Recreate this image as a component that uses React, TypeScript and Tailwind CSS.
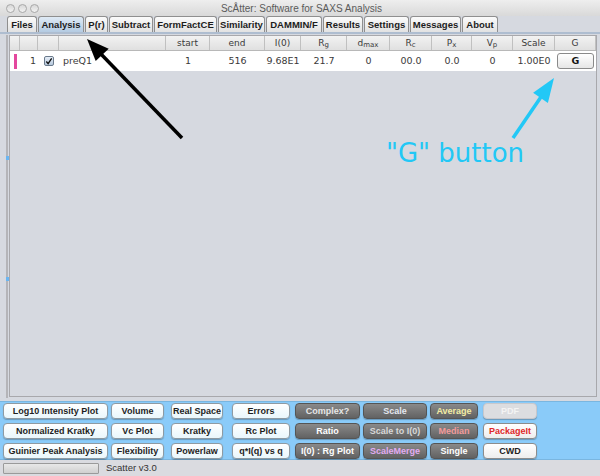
import React from "react";

const tabs = ["Files", "Analysis", "P(r)", "Subtract", "FormFactCE", "Similarity", "DAMMIN/F", "Results", "Settings", "Messages", "About"];
const tabW = ["w-[30px]", "w-[46px]", "w-[23px]", "w-[44px]", "w-[63px]", "w-[47px]", "w-[56px]", "w-[40px]", "w-[45px]", "w-[51px]", "w-[36px]"];

const colW = ["w-[10px]", "w-[18px]", "w-[21px]", "w-[107px]", "w-[44px]", "w-[55px]", "w-[36px]", "w-[46px]", "w-[43px]", "w-[42px]", "w-[40px]", "w-[41px]", "w-[42px]", "w-[41px]"];

type Btn = { t: string; k: "light" | "dark" | "pdf" | "white"; c?: string };
const colSpec = [
  "w-[105px] ml-[3px]",
  "w-[53px] ml-[3px]",
  "w-[52px] ml-[7px]",
  "w-[58px] ml-[9px]",
  "w-[65px] ml-[5px]",
  "w-[64px] ml-[3px]",
  "w-[48px] ml-[3px]",
  "w-[54px] ml-[5px]",
];
const rows: Btn[][] = [
  [
    { t: "Log10 Intensity Plot", k: "light" },
    { t: "Volume", k: "light" },
    { t: "Real Space", k: "light" },
    { t: "Errors", k: "light" },
    { t: "Complex?", k: "dark", c: "text-[#e6e6e6]" },
    { t: "Scale", k: "dark", c: "text-[#e4e8f0]" },
    { t: "Average", k: "dark", c: "text-[#f2eca4]" },
    { t: "PDF", k: "pdf" },
  ],
  [
    { t: "Normalized Kratky", k: "light" },
    { t: "Vc Plot", k: "light" },
    { t: "Kratky", k: "light" },
    { t: "Rc Plot", k: "light" },
    { t: "Ratio", k: "dark", c: "text-white" },
    { t: "Scale to I(0)", k: "dark", c: "text-[#d8d8d8]" },
    { t: "Median", k: "dark", c: "text-[#f29a9a]" },
    { t: "PackageIt", k: "white", c: "text-[#e0282a]" },
  ],
  [
    { t: "Guinier Peak Analysis", k: "light" },
    { t: "Flexibility", k: "light" },
    { t: "Powerlaw", k: "light" },
    { t: "q*I(q) vs q", k: "light" },
    { t: "I(0) : Rg Plot", k: "dark", c: "text-white" },
    { t: "ScaleMerge", k: "dark", c: "text-[#e2acf2]" },
    { t: "Single", k: "dark", c: "text-white" },
    { t: "CWD", k: "white", c: "text-[#222]" },
  ],
];

const LIB = { fontFamily: '"Liberation Sans", Arial, sans-serif' };

function Button({ b, spec }: { b: Btn; spec: string }) {
  let cls = "";
  if (b.k === "light") cls = "bg-gradient-to-b from-[#ffffff] to-[#e9f7fc] border-[#8e9aa2] text-[#1e1e1e]";
  else if (b.k === "dark") cls = "bg-gradient-to-b from-[#8a8a8a] to-[#626262] border-[#555] " + (b.c ?? "");
  else if (b.k === "pdf") cls = "bg-[#dcdde0] border-[#c8c8cc] text-[#f4f4f4]";
  else cls = "bg-gradient-to-b from-[#ffffff] to-[#eeeeee] border-[#8c8c8c] " + (b.c ?? "");
  return (
    <div style={LIB} className={`${spec} h-[16px] shrink-0 rounded-[4px] border flex items-center justify-center whitespace-nowrap text-[9px] font-bold leading-none shadow-[0_1px_1px_rgba(0,0,0,0.25)] ${cls}`}>
      {b.t}
    </div>
  );
}

export default function App() {
  return (
    <div className="relative w-[600px] h-[476px] overflow-hidden bg-[#d6d9e0] flex flex-col" style={{ fontFamily: '"DejaVu Sans", "Liberation Sans", sans-serif' }}>
      {/* title bar */}
      <div className="h-[16px] bg-gradient-to-b from-[#eeeeee] to-[#d9d9d9] flex items-center relative">
        <div className="flex gap-[3px] ml-[6px]">
          <div className="w-[9px] h-[9px] rounded-full border border-[#a8a8a8] bg-gradient-to-b from-[#d8d8d8] to-[#f2f2f2]" />
          <div className="w-[9px] h-[9px] rounded-full border border-[#a8a8a8] bg-gradient-to-b from-[#d8d8d8] to-[#f2f2f2]" />
          <div className="w-[9px] h-[9px] rounded-full border border-[#a8a8a8] bg-gradient-to-b from-[#d8d8d8] to-[#f2f2f2]" />
        </div>
        <div style={LIB} className="flex-1 text-center text-[10px] text-[#5a5a5a] -ml-[36px]">ScÅtter: Software for SAXS Analysis</div>
      </div>
      {/* tab bar */}
      <div className="h-[18px] flex items-end pl-[7px] border-b-2 border-[#aebdd0]">
        {tabs.map((t, i) => (
          <div
            key={t}
            style={LIB}
            className={`${tabW[i]} h-[16px] mr-[1px] border border-b-0 border-[#8f8f8f] rounded-t-[3px] flex items-center justify-center whitespace-nowrap text-[9.5px] font-bold leading-none text-[#1c1c1c] ${
              i === 1 ? "bg-gradient-to-b from-[#dfeaf5] to-[#b4cbe2]" : "bg-gradient-to-b from-[#fbfbfb] to-[#e2e2e2]"
            }`}
          >
            {t}
          </div>
        ))}
      </div>
      {/* main */}
      <div className="flex-1 flex pt-[1px]">
        <div className="w-[10px] relative">
          <div className="absolute left-[6px] top-0 bottom-[0px] w-[2px] border-x border-[#b4b4b8] bg-[#e4e4e8]" />
          <div className="absolute left-[6px] top-[121px] w-[3px] h-[4px] bg-[#6ab6f2]" />
          <div className="absolute left-[6px] top-[242px] w-[3px] h-[4px] bg-[#6ab6f2]" />
        </div>
        <div className="flex-1 mr-[3px] mb-[1px] border border-[#a8a8ac] bg-[#d6d9e0]">
          <div className="flex h-[15px] bg-gradient-to-b from-[#f2f2f2] to-[#e0e0e0] border-b border-[#b8b8b8] text-[9px] text-[#3a3a3a]">
            {["", "", "", "", "start", "end", "I(0)", "Rg", "dmax", "Rc", "Px", "Vp", "Scale", "G"].map((h, i) => (
              <div key={i} className={`${colW[i]} shrink-0 border-r border-[#c0c0c0] flex items-center justify-center leading-none`}>
                {h === "Rg" ? <span>R<sub className="text-[7px]">g</sub></span> : h === "dmax" ? <span>d<sub className="text-[7px]">max</sub></span> : h === "Rc" ? <span>R<sub className="text-[7px]">c</sub></span> : h === "Px" ? <span>P<sub className="text-[7px]">x</sub></span> : h === "Vp" ? <span>V<sub className="text-[7px]">p</sub></span> : h}
              </div>
            ))}
          </div>
          <div className="flex h-[20px] bg-white text-[9.5px] text-[#3a3a3a] items-center">
            <div className="w-[10px] shrink-0 flex justify-center"><div className="w-[3px] h-[15px] bg-[#e4489e] ml-[1px]" /></div>
            <div className="w-[18px] shrink-0 text-right pr-[2px]">1</div>
            <div className="w-[21px] shrink-0 flex items-center justify-center">
              <div className="w-[10px] h-[10px] border border-[#6a7a8c] rounded-[2px] bg-gradient-to-b from-[#e6eef8] to-[#b6c8dc] flex items-center justify-center">
                <svg width="9" height="9" viewBox="0 0 9 9"><path d="M1.5 4.5 L3.5 7 L7.5 1" stroke="#111" strokeWidth="1.5" fill="none" /></svg>
              </div>
            </div>
            <div className="w-[107px] shrink-0 pl-[4px]">preQ1</div>
            <div className="w-[44px] shrink-0 text-center">1</div>
            <div className="w-[55px] shrink-0 text-center">516</div>
            <div className="w-[36px] shrink-0 text-center">9.68E1</div>
            <div className="w-[46px] shrink-0 text-center">21.7</div>
            <div className="w-[43px] shrink-0 text-center">0</div>
            <div className="w-[42px] shrink-0 text-center">00.0</div>
            <div className="w-[40px] shrink-0 text-center">0.0</div>
            <div className="w-[41px] shrink-0 text-center">0</div>
            <div className="w-[42px] shrink-0 text-center">1.00E0</div>
            <div className="w-[41px] shrink-0 flex items-center justify-center">
              <div className="w-[37px] h-[16px] rounded-[3px] border border-[#8a8a8a] bg-gradient-to-b from-[#ffffff] to-[#e6e6e6] flex items-center justify-center text-[9.5px] font-bold text-[#111]">G</div>
            </div>
          </div>
        </div>
      </div>
      {/* button panel */}
      <div className="h-[59px] mt-[3px] bg-[#8acbf9] border-y border-[#7ab6e0] flex flex-col gap-[4px] pt-[1px]">
        {rows.map((r, ri) => (
          <div key={ri} className="flex">
            {r.map((b, bi) => (
              <Button key={bi} b={b} spec={colSpec[bi]} />
            ))}
          </div>
        ))}
      </div>
      {/* status bar */}
      <div className="h-[16px] flex items-center bg-[#dadbe0]">
        <div className="w-[96px] h-[11px] ml-[3px] border border-[#9a9a9a] bg-gradient-to-b from-[#e8e8e8] to-[#d0d0d0] rounded-[1px]" />
        <div style={LIB} className="ml-[7px] text-[9.5px] text-[#333]">Scatter v3.0</div>
      </div>

      {/* annotations */}
      <svg className="absolute left-0 top-0 pointer-events-none" width="600" height="476" viewBox="0 0 600 476">
        <line x1="182" y1="138" x2="100" y2="53" stroke="#000" strokeWidth="3.5" />
        <polygon points="87,39 108.7,48.7 95.7,61.1" fill="#000" />
        <line x1="513" y1="138" x2="543" y2="94" stroke="#22c8f6" strokeWidth="3.5" />
        <polygon points="554,78 547.9,102.9 533.1,92.7" fill="#22c8f6" />
      </svg>
      <div className="absolute left-[386px] top-[140px] text-[26px] leading-[26px] text-[#22c8f6] whitespace-nowrap" style={{ fontFamily: '"DejaVu Sans", sans-serif' }}>"G" button</div>
    </div>
  );
}
